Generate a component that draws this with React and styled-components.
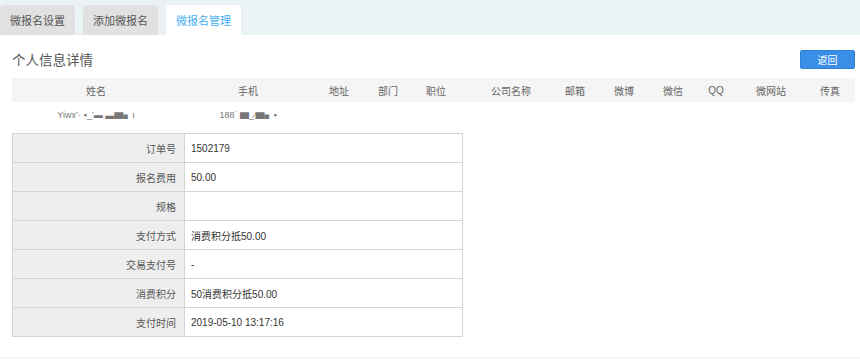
import React from "react";
import styled, { createGlobalStyle } from "styled-components";

const GlobalStyle = createGlobalStyle`
  html, body {
    margin: 0;
    padding: 0;
    background: #fff;
    font-family: "Liberation Sans", "Noto Sans CJK SC", sans-serif;
  }
`;

const tabs = ["微报名设置", "添加微报名", "微报名管理"];

// widths chosen so each label sits centred where the original put it
const columns = [
  { name: "姓名", width: 168 },
  { name: "手机", width: 136 },
  { name: "地址", width: 46 },
  { name: "部门", width: 52 },
  { name: "职位", width: 44 },
  { name: "公司名称", width: 106 },
  { name: "邮箱", width: 22 },
  { name: "微博", width: 76 },
  { name: "微信", width: 22 },
  { name: "QQ", width: 64 },
  { name: "微网站", width: 46 },
  { name: "传真", width: 72 },
];

const details = [
  ["订单号", "1502179"],
  ["报名费用", "50.00"],
  ["规格", ""],
  ["支付方式", "消费积分抵50.00"],
  ["交易支付号", "-"],
  ["消费积分", "50消费积分抵50.00"],
  ["支付时间", "2019-05-10 13:17:16"],
];

export default function App() {
  const template = columns.map((c) => `${c.width}px`).join(" ");
  return (
    <Page>
      <GlobalStyle />
      <TabBar>
        {tabs.map((t, i) => (
          <Tab key={t} $active={i === 2}>
            {t}
          </Tab>
        ))}
      </TabBar>
      <Content>
        <TitleRow>
          <Title>个人信息详情</Title>
          <BackButton>返回</BackButton>
        </TitleRow>
        <Grid $template={template} $head>
          {columns.map((c) => (
            <Cell key={c.name}>{c.name}</Cell>
          ))}
        </Grid>
        <Grid $template={template}>
          <Cell $masked>Yiwx’· ▪_’▬ ▃▆▖ı</Cell>
          <Cell $masked>188˙ ▆_⁄▆▖▪</Cell>
          {columns.slice(2).map((c) => (
            <Cell key={c.name} />
          ))}
        </Grid>
        <DetailTable>
          <tbody>
            {details.map(([label, value]) => (
              <tr key={label}>
                <Label>{label}</Label>
                <Value>{value}</Value>
              </tr>
            ))}
          </tbody>
        </DetailTable>
      </Content>
    </Page>
  );
}

const Page = styled.div`
  width: 860px;
  height: 359px;
  overflow: hidden;
`;

const TabBar = styled.div`
  display: flex;
  align-items: flex-end;
  gap: 8px;
  height: 35px;
  background: #ebf2f6;
`;

const Tab = styled.div`
  width: 75px;
  height: 30px;
  display: flex;
  align-items: center;
  justify-content: center;
  font-size: 11px;
  border-radius: 4px 4px 0 0;
  background: ${(p) => (p.$active ? "#fff" : "#e1e1e1")};
  color: ${(p) => (p.$active ? "#45aef2" : "#555")};
`;

const Content = styled.div`
  padding: 0 5px 0 12px;
  height: 322px;
  border-bottom: 1px solid #f0f0f0;
`;

const TitleRow = styled.div`
  display: flex;
  justify-content: space-between;
  align-items: center;
  padding-top: 15px;
  padding-bottom: 9px;
`;

const Title = styled.h2`
  margin: 0;
  font-size: 13.5px;
  font-weight: normal;
  color: #555;
  line-height: 19px;
  transform: translateY(1px);
`;

const BackButton = styled.button`
  width: 55px;
  height: 19px;
  padding: 0;
  border: 1px solid #2f7fd6;
  border-radius: 2px;
  background: #3a8ee6;
  color: #fff;
  font-family: inherit;
  font-size: 10px;
`;

const Grid = styled.div`
  display: grid;
  grid-template-columns: ${(p) => p.$template};
  height: 24px;
  align-items: center;
  background: ${(p) => (p.$head ? "#f5f5f5" : "#fff")};
  font-size: 10px;
`;

const Cell = styled.div`
  display: flex;
  justify-content: center;
  white-space: nowrap;
  color: ${(p) => (p.$masked ? "#777" : "#666")};
  font-size: ${(p) => (p.$masked ? "9px" : "10px")};
`;

const DetailTable = styled.table`
  margin-top: 7px;
  width: 451px;
  border-collapse: collapse;
  border: 1px solid #cfcfcf;
  font-size: 10px;
  td {
    height: 28px;
    border: 1px solid #d4d4d4;
    padding: 0;
  }
`;

const Label = styled.td`
  width: 163px;
  padding-right: 8px !important;
  text-align: right;
  background: #eeeeee;
  color: #555;
`;

const Value = styled.td`
  padding-left: 6px !important;
  color: #333;
`;
